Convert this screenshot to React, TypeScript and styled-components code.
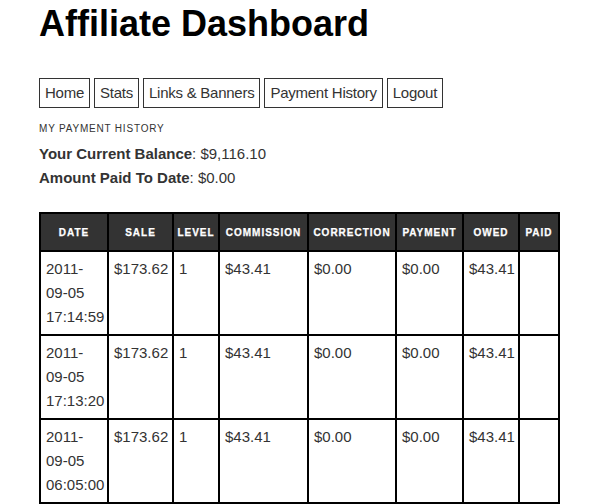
import styled, { createGlobalStyle } from "styled-components"

const GlobalStyle = createGlobalStyle`
  body {
    margin: 0;
    background: #fff;
    color: #333;
    font-family: "Liberation Sans", Arial, sans-serif;
  }
`

const rows = [
  { date: ["2011-", "09-05", "17:14:59"], sale: "$173.62", level: "1", commission: "$43.41", correction: "$0.00", payment: "$0.00", owed: "$43.41", paid: "" },
  { date: ["2011-", "09-05", "17:13:20"], sale: "$173.62", level: "1", commission: "$43.41", correction: "$0.00", payment: "$0.00", owed: "$43.41", paid: "" },
  { date: ["2011-", "09-05", "06:05:00"], sale: "$173.62", level: "1", commission: "$43.41", correction: "$0.00", payment: "$0.00", owed: "$43.41", paid: "" },
]

const columns = [
  { label: "Date", width: 68 },
  { label: "Sale", width: 65 },
  { label: "Level", width: 46 },
  { label: "Commission", width: 89 },
  { label: "Correction", width: 88 },
  { label: "Payment", width: 67 },
  { label: "Owed", width: 56 },
  { label: "Paid", width: 40 },
]

export default function App() {
  return (
    <Page>
      <GlobalStyle />
      <Title>Affiliate Dashboard</Title>
      <Nav>
        <NavLink href="#">Home</NavLink>
        <NavLink href="#">Stats</NavLink>
        <NavLink href="#">Links &amp; Banners</NavLink>
        <NavLink href="#">Payment History</NavLink>
        <NavLink href="#">Logout</NavLink>
      </Nav>
      <SectionLabel>My Payment History</SectionLabel>
      <Summary>
        <SummaryLine><strong>Your Current Balance</strong>: $9,116.10</SummaryLine>
        <SummaryLine><strong>Amount Paid To Date</strong>: $0.00</SummaryLine>
      </Summary>
      <Table>
        <colgroup>
          {columns.map((c) => (
            <col key={c.label} style={{ width: c.width }} />
          ))}
        </colgroup>
        <thead>
          <tr>
            {columns.map((c) => (
              <Th key={c.label}>{c.label}</Th>
            ))}
          </tr>
        </thead>
        <tbody>
          {rows.map((r, i) => (
            <tr key={i}>
              <Td>
                {r.date.map((d) => (
                  <div key={d}>{d}</div>
                ))}
              </Td>
              <Td>{r.sale}</Td>
              <Td>{r.level}</Td>
              <Td>{r.commission}</Td>
              <Td>{r.correction}</Td>
              <Td>{r.payment}</Td>
              <Td>{r.owed}</Td>
              <Td>{r.paid}</Td>
            </tr>
          ))}
        </tbody>
      </Table>
    </Page>
  )
}

const Page = styled.div`
  padding: 0 0 0 39px;
`

const Title = styled.h1`
  margin: 0;
  padding-top: 3px;
  font-size: 36px;
  line-height: 42px;
  font-weight: 700;
  color: #000;
`

const Nav = styled.nav`
  display: flex;
  gap: 4px;
  margin-top: 33px;
`

const NavLink = styled.a`
  display: block;
  border: 1px solid #333;
  padding: 0 5px;
  height: 28px;
  line-height: 28px;
  font-size: 15px;
  letter-spacing: -0.25px;
  color: #333;
  text-decoration: none;
`

const SectionLabel = styled.div`
  margin-top: 14px;
  font-size: 10px;
  line-height: 14px;
  letter-spacing: 0.8px;
  text-transform: uppercase;
  color: #333;
`

const Summary = styled.div`
  margin-top: 6px;
`

const SummaryLine = styled.div`
  font-size: 15px;
  line-height: 24px;
  color: #333;

  strong {
    font-weight: 700;
  }
`

const Table = styled.table`
  margin-top: 22px;
  border-collapse: collapse;
  table-layout: fixed;
  width: 519px;
  border: 2px solid #000;
`

const Th = styled.th`
  background: #333;
  color: #fff;
  border: 2px solid #000;
  height: 36px;
  padding: 0;
  font-size: 10px;
  font-weight: 700;
  letter-spacing: 1px;
  -webkit-text-stroke: 0.25px #fff;
  text-transform: uppercase;
  text-align: center;
  vertical-align: middle;
`

const Td = styled.td`
  border: 2px solid #000;
  height: 83px;
  padding: 5px 5px;
  box-sizing: border-box;
  vertical-align: top;
  font-size: 15px;
  line-height: 24px;
  color: #333;
`
